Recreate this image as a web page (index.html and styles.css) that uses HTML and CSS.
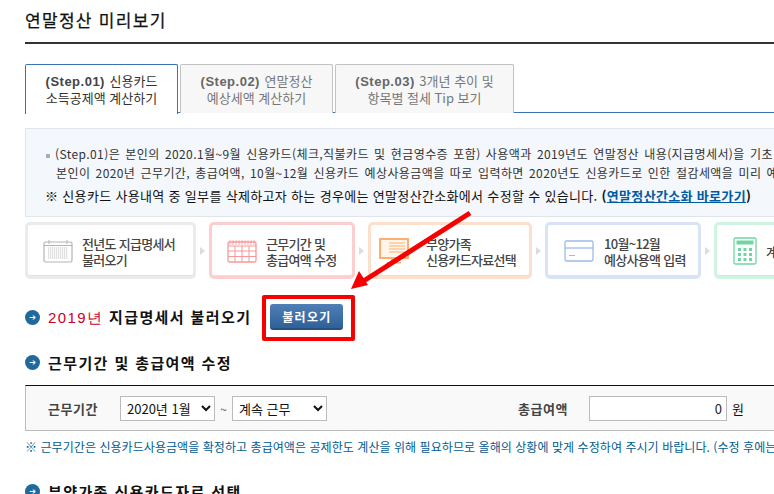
FILE: index.html
```html
<!DOCTYPE html>
<html lang="ko">
<head>
<meta charset="utf-8">
<title>연말정산 미리보기</title>
<link rel="stylesheet" href="styles.css">
</head>
<body>
<div class="page">
  <h1 class="title">연말정산 미리보기</h1>
  <ul class="tabs">
    <li class="tab tab-on"><b>(Step.01)</b> 신용카드<br>소득공제액 계산하기</li>
    <li class="tab"><b>(Step.02)</b> 연말정산<br>예상세액 계산하기</li>
    <li class="tab tab-wide"><b>(Step.03)</b> 3개년 추이 및<br>항목별 절세 Tip 보기</li>
  </ul>
  <div class="info">
    <p class="info-line"><span class="dot"></span>(Step.01)은 본인의 2020.1월~9월 신용카드(체크,직불카드 및 현금영수증 포함) 사용액과 2019년도 연말정산 내용(지급명세서)을 기초</p>
    <p class="info-line info-indent">본인이 2020년 근무기간, 총급여액, 10월~12월 신용카드 예상사용금액을 따로 입력하면 2020년도 신용카드로 인한 절감세액을 미리 예</p>
    <p class="info-notice">※ 신용카드 사용내역 중 일부를 삭제하고자 하는 경우에는 연말정산간소화에서 수정할 수 있습니다. <b>(<a class="link">연말정산간소화 바로가기</a>)</b></p>
  </div>
  <div class="steps">
    <div class="step step-grey">
      <svg class="ico" viewBox="0 0 30 24"><rect x="1" y="3" width="28" height="20" rx="1.5" fill="#fff" stroke="#b5b5b5" stroke-width="1.2"/><path d="M1 6.5h28M6 1v4M24 1v4" stroke="#b5b5b5"/><path d="M5 9h20M5 11h20M5 13h20M5 15h20M5 17h20M5 19h20" stroke="#c4c4c4" stroke-dasharray="1.2 .8" stroke-width="1.1"/></svg>
      <span class="step-text">전년도 지급명세서<br>불러오기</span>
    </div>
    <i class="chev"></i>
    <div class="step step-red">
      <svg class="ico" viewBox="0 0 30 24"><rect x="1" y="3" width="28" height="20" rx="1.5" fill="#fff" stroke="#f59a9a" stroke-width="1.3"/><path d="M1 7h28M1 12h28M1 17.5h28M8 7v16M15 7v16M22 7v16" stroke="#f59a9a"/><path d="M3 1v5M6 1v5M9 1v5M12 1v5M15 1v5M18 1v5M21 1v5M24 1v5M27 1v5" stroke="#f59a9a" stroke-width=".8"/></svg>
      <span class="step-text">근무기간 및<br>총급여액 수정</span>
    </div>
    <i class="chev"></i>
    <div class="step step-orange">
      <svg class="ico" viewBox="0 0 30 26"><rect x="1" y="1" width="28" height="19" fill="#fff5ea" stroke="#fbb072" stroke-width="2"/><path d="M10 5h16M10 8h16M10 11h16M10 14h16" stroke="#fbb072"/><path d="M12 20h6v3h-6zM8 24h14v1.5H8z" fill="#fbb072"/></svg>
      <span class="step-text">부양가족<br>신용카드자료선택</span>
    </div>
    <i class="chev"></i>
    <div class="step step-blue">
      <svg class="ico" viewBox="0 0 30 22"><rect x="1" y="1" width="28" height="20" rx="1.5" fill="#fff" stroke="#9dbbe8" stroke-width="1.3"/><path d="M1 8h28" stroke="#9dbbe8" stroke-width="1.3"/><path d="M5 15.5h6" stroke="#9dbbe8"/></svg>
      <span class="step-text">10월~12월<br>예상사용액 입력</span>
    </div>
    <i class="chev"></i>
    <div class="step step-green">
      <svg class="ico ico-calc" viewBox="0 0 24 28"><rect x="1" y="1" width="22" height="26" rx="1.5" fill="#fff" stroke="#6ed6a4" stroke-width="1.3"/><rect x="3.5" y="3.5" width="17" height="4" fill="#6ed6a4"/><path d="M5 11h3v3H5zM10.5 11h3v3h-3zM16 11h3v3h-3zM5 16h3v3H5zM10.5 16h3v3h-3zM16 16h3v3h-3zM5 21h3v3H5zM10.5 21h3v3h-3zM16 21h3v3h-3z" fill="#6ed6a4"/></svg>
      <span class="step-text">계</span>
    </div>
  </div>
  <h2 class="head head-first"><i class="bullet"></i><span><em>2019년</em> 지급명세서 불러오기</span><button class="load" type="button">불러오기</button></h2>
  <h2 class="head head-second"><i class="bullet"></i><span>근무기간 및 총급여액 수정</span></h2>
  <div class="form">
    <label class="label">근무기간</label>
    <select class="sel"><option>2020년 1월</option></select>
    <span class="tilde">~</span>
    <select class="sel"><option>계속 근무</option></select>
    <label class="label label-pay">총급여액</label>
    <input class="amount" type="text" value="0">
    <span class="won">원</span>
  </div>
  <p class="note">※ 근무기간은 신용카드사용금액을 확정하고 총급여액은 공제한도 계산을 위해 필요하므로 올해의 상황에 맞게 수정하여 주시기 바랍니다. (수정 후에는</p>
  <h2 class="head head-third"><i class="bullet"></i><span>부양가족 신용카드자료 선택</span></h2>
</div>
<svg class="arrow" width="774" height="494" viewBox="0 0 774 494"><path d="M470 213L362 282" stroke="#f60000" stroke-width="5" fill="none"/><path d="M351 289L368 285L359 271Z" fill="#f60000"/></svg>
<div class="redbox"></div>
</body>
</html>
```
FILE: styles.css
```css
html, body { margin: 0; height: 494px; overflow: hidden; background: #fff; }
body { font-family: "Noto Sans CJK KR", "Liberation Sans", sans-serif; font-size: 12px; color: #222; position: relative; }
.page { width: 749px; padding: 0 0 0 25px; overflow: hidden; }
.title { margin: 0; height: 42px; border-bottom: 2px solid #333; font-size: 17px; font-weight: 400; line-height: 40px; letter-spacing: 1.3px; color: #111; -webkit-text-stroke: .25px #111; }
.tabs { list-style: none; margin: 20px 0 0; padding: 0; display: flex; gap: 2px; border-bottom: 1px solid #3a72b5; height: 48px; }
.tab { width: 151px; border: 1px solid #c2c2c2; border-bottom: 0; border-radius: 2px 2px 0 0; background: #f7f7f7; color: #777; text-align: center; line-height: 16px; padding-top: 8px; height: 40px; font-size: 13px; white-space: nowrap; }
.tab b { color: #666; font-family: "Liberation Sans", sans-serif; font-size: 13px; letter-spacing: .5px; margin-right: 1px; }
.tab-wide { width: 177px; }
.tab-on { border-color: #3a72b5; background: #fff; color: #333; height: 41px; }
.tab-on b { color: #444; }
.info { margin-top: 15px; height: 87px; border: 1px solid #e0e5ec; border-right: 0; background: #f4f7fc; padding: 0 0 0 20px; color: #333; }
.info-line { margin: 0; line-height: 19px; letter-spacing: .4px; word-spacing: 1.5px; white-space: nowrap; font-size: 12px; }
.info-line:first-child { margin-top: 15px; }
.dot { display: inline-block; width: 4px; height: 4px; background: #a9adb5; vertical-align: middle; margin-right: 5px; }
.info-indent { padding-left: 10px; }
.info-notice { margin: 4px 0 0 -1px; line-height: 19px; font-size: 13px; letter-spacing: .33px; white-space: nowrap; color: #111; }
.link { color: #005c9e; text-decoration: underline; }
.steps { display: flex; align-items: center; margin-top: 5px; height: 57px; }
.step { height: 57px; box-sizing: border-box; border: 3px solid; border-radius: 5px; background: #fff; display: flex; align-items: center; font-size: 13px; line-height: 16px; color: #444; font-weight: 500; white-space: nowrap; flex: none; box-shadow: inset 0 -1px 0 rgba(0,0,0,.12); }
.step-text { padding-top: 3px; letter-spacing: -.7px; }
.ico { width: 30px; height: 26px; flex: none; margin-right: 9px; }
.ico-calc { width: 24px; height: 28px; }
.step-grey { width: 171px; border-color: #ebebeb; padding-left: 15px; }
.step-red { width: 146px; border-color: #fdcece; padding-left: 15px; }
.step-orange { width: 164px; border-color: #fde0cc; padding-left: 8px; }
.step-blue { width: 156px; border-color: #d8e3f8; padding-left: 16px; }
.step-green { width: 160px; border-color: #cdf5e2; padding-left: 16px; }
.step-orange .ico { margin-right: 17px; }
.step-blue .ico { margin-right: 10px; }
.chev { flex: none; width: 13px; display: flex; justify-content: center; }
.chev::before { content: ""; width: 0; height: 0; border: 4px solid transparent; border-left: 5px solid #dcdcdc; margin-left: 3px; }
.head { margin: 0; display: flex; align-items: center; font-size: 15px; font-weight: 700; letter-spacing: 1.4px; color: #111; }
.head em { font-style: normal; color: #c8002c; font-family: "Liberation Sans", sans-serif; font-weight: 400; }
.bullet { width: 15px; height: 15px; border-radius: 50%; margin-right: 8px; background: #20699f; position: relative; flex: none; }
.bullet::after { content: "➔"; position: absolute; inset: 0; color: #fff; font-size: 8px; line-height: 15px; text-align: center; font-family: "DejaVu Sans", sans-serif; letter-spacing: 0; font-weight: 400; }
.head-first { margin-top: 25px; height: 26px; }
.head-second { margin-top: 19px; height: 26px; }
.head-third { margin-top: 22px; height: 26px; }
.load { margin-left: 19px; width: 73px; height: 26px; border: 0; border-radius: 3px; background: linear-gradient(#4f7fb5, #2f6199); border-bottom: 2px solid #28507c; color: #fff; font: 700 12px "Noto Sans CJK KR", sans-serif; letter-spacing: 1.3px; padding: 0; }
.form { margin-top: 10px; height: 46px; width: 900px; box-sizing: border-box; border-top: 1px solid #111; border-bottom: 1px solid #bbb; border-left: 1px solid #bbb; background: #f9f9f9; display: flex; align-items: center; }
.label { margin-left: 22px; width: 72px; font-size: 13px; font-weight: 700; letter-spacing: .5px; color: #444; }
.sel { width: 95px; height: 25px; box-sizing: border-box; border: 1px solid #bbb; border-radius: 0; background: #fff; font: 13px "Noto Sans CJK KR", sans-serif; color: #111; padding: 0 0 0 2px; }
.tilde { width: 17px; text-align: center; color: #555; }
.label-pay { margin-left: 191px; width: 71px; }
.amount { width: 138px; height: 25px; box-sizing: border-box; border: 1px solid #bbb; text-align: right; font: 13px "Noto Sans CJK KR", sans-serif; color: #222; padding: 0 4px; background: #fff; }
.won { margin-left: 5px; font-size: 13px; color: #111; }
.note { margin: 7px 0 0; line-height: 18px; font-size: 12px; letter-spacing: .06px; white-space: nowrap; color: #005c90; }
.arrow { position: absolute; left: 0; top: 0; pointer-events: none; }
.redbox { position: absolute; left: 262px; top: 295px; width: 85px; height: 38px; border: 4px solid #f60000; border-radius: 2px; }
```
